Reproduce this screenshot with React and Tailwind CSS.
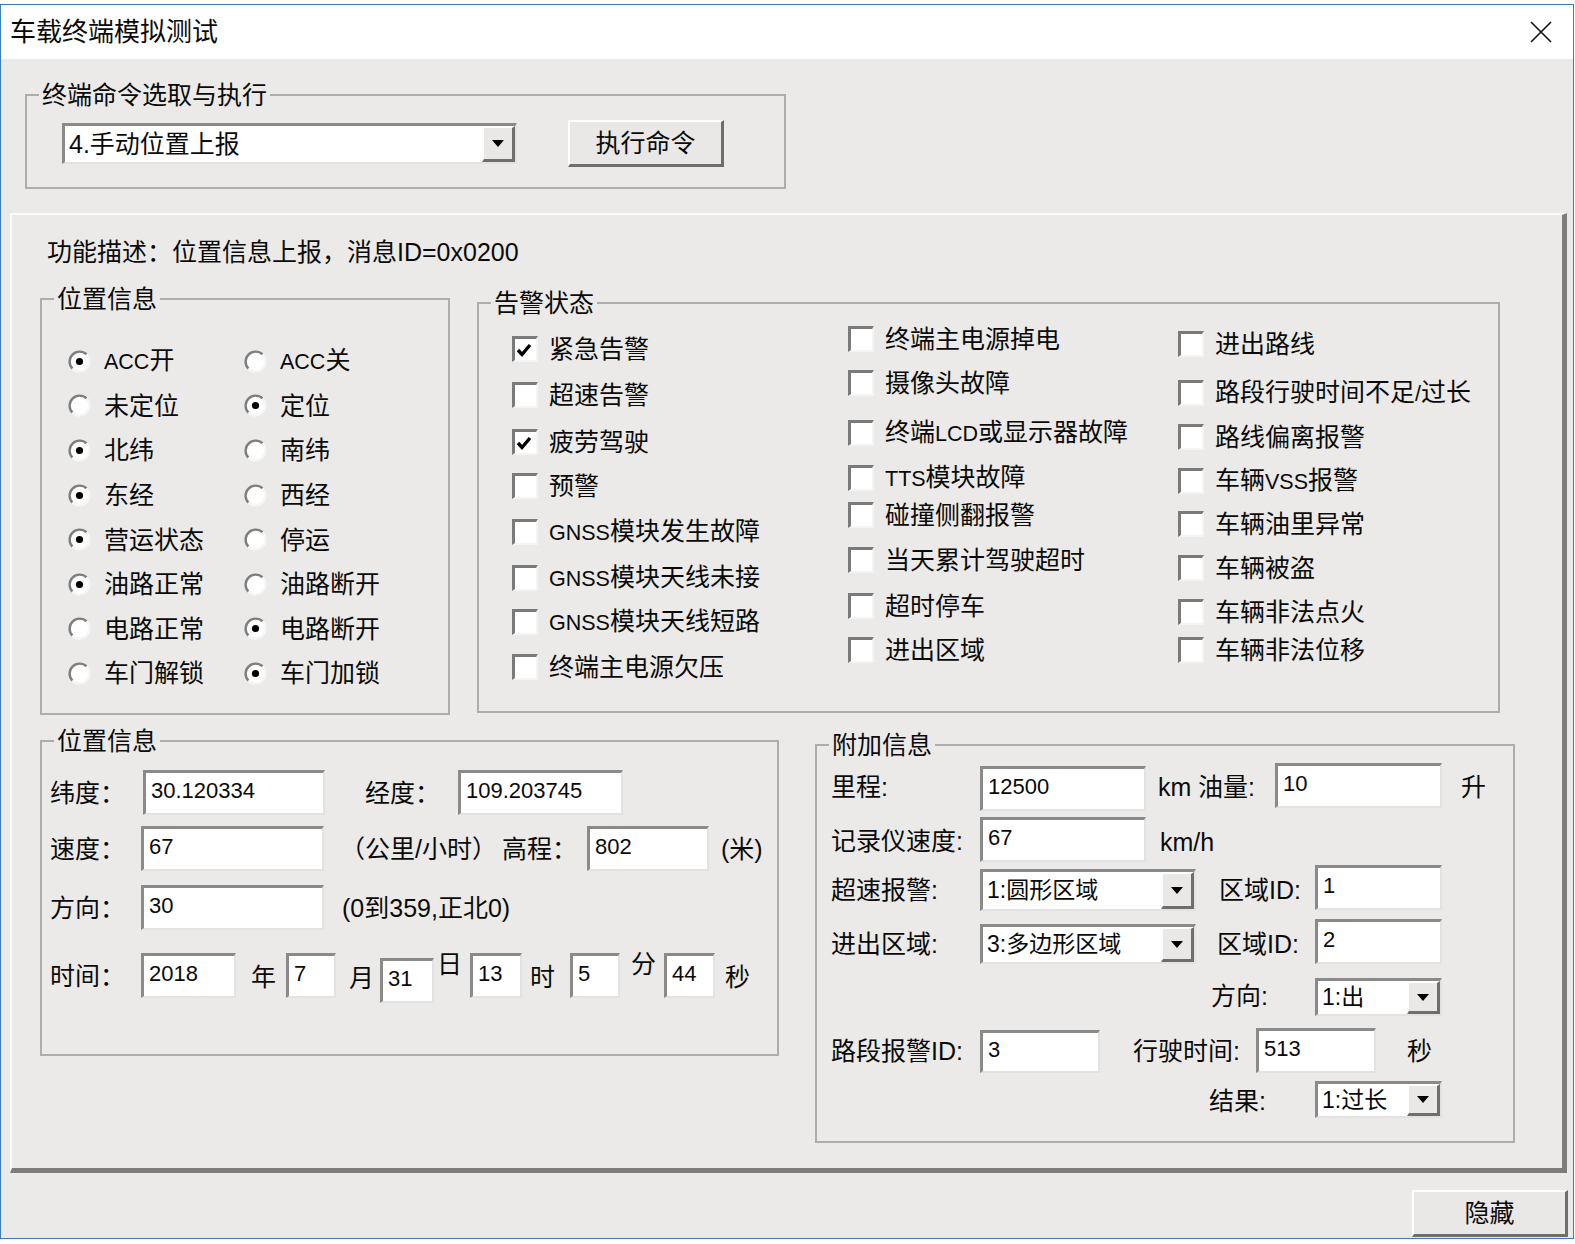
import React from 'react';

// Win32-style 3D edges
const sunken = 'bg-white border-t-[3px] border-l-[3px] border-t-[#8a8a8a] border-l-[#8a8a8a] border-r-2 border-b-2 border-r-[#e2e2e2] border-b-[#e2e2e2]';
const raised = 'bg-[#e9e8e6] border-t-2 border-l-2 border-t-white border-l-white border-r-[3px] border-b-[3px] border-r-[#6e6e6e] border-b-[#6e6e6e]';

// Latin runs in the labels are drawn a bit narrower than the CJK text
function mixed(text) {
  return text.split(/([\x20-\x7e]+)/).map((part, i) =>
    /^[\x20-\x7e]+$/.test(part) ? <span key={i} className="text-[0.86em]">{part}</span> : part
  );
}

function Group({ title, className = '', children }) {
  return (
    <fieldset className={`border-2 border-[#adadad] ${className}`}>
      <legend className="ml-[12px] px-[3px] text-[25px] leading-[30px]">{title}</legend>
      {children}
    </fieldset>
  );
}

function Field({ value, className = '' }) {
  return (
    <div className={`${sunken} flex items-center pl-[5px] pb-[5px] text-[22px] leading-none ${className}`}>
      {value}
    </div>
  );
}

function Combo({ value, className = '', text = 'text-[23px]' }) {
  return (
    <div className={`${sunken} flex items-stretch ${className}`}>
      <div className={`flex-1 flex items-center pl-[4px] leading-none ${text}`}>{value}</div>
      <div className={`${raised} w-[33px] flex items-center justify-center`}>
        <svg width="12" height="7" viewBox="0 0 12 7"><path d="M0 0h12L6 7z" fill="#000" /></svg>
      </div>
    </div>
  );
}

function Label({ children, className = '' }) {
  return <span className={`text-[25px] leading-[30px] whitespace-nowrap ${className}`}>{children}</span>;
}

function Radio({ label, checked }) {
  return (
    <div className="h-[44.6px] flex items-center gap-[13px]">
      <svg width="23" height="23" viewBox="0 0 23 23" className="shrink-0">
        <circle cx="11.5" cy="11.5" r="10" fill="#fff" />
        <path d="M4.43 18.57A10 10 0 0 1 18.57 4.43" stroke="#7e7e7e" strokeWidth="2.4" fill="none" />
        <path d="M18.57 4.43A10 10 0 0 1 4.43 18.57" stroke="#f6f6f6" strokeWidth="2.4" fill="none" />
        {checked && <circle cx="11.5" cy="11.5" r="3.6" fill="#000" />}
      </svg>
      <span className="text-[25px] leading-[30px] whitespace-nowrap">{mixed(label)}</span>
    </div>
  );
}

function Check({ label, checked, mt }) {
  return (
    <div className={`h-[26px] flex items-center gap-[11px] ${mt}`}>
      <div className="w-[26px] h-[26px] shrink-0 bg-white border-t-[3px] border-l-[3px] border-t-[#7a7a7a] border-l-[#7a7a7a] border-r-2 border-b-2 border-r-[#f4f4f4] border-b-[#f4f4f4] flex items-center">
        {checked && (
          <svg width="18" height="16" viewBox="0 0 18 16" className="ml-[1px]">
            <path d="M2 8 L6 12.5 L14 3" stroke="#000" strokeWidth="3.4" fill="none" />
          </svg>
        )}
      </div>
      <span className="text-[25px] leading-[30px] whitespace-nowrap">{mixed(label)}</span>
    </div>
  );
}

const radios = [
  ['ACC开', true, 'ACC关', false],
  ['未定位', false, '定位', true],
  ['北纬', true, '南纬', false],
  ['东经', true, '西经', false],
  ['营运状态', true, '停运', false],
  ['油路正常', true, '油路断开', false],
  ['电路正常', false, '电路断开', true],
  ['车门解锁', false, '车门加锁', true],
];

const alarmCols = [
  {
    width: 'w-[336px]',
    items: [
      ['紧急告警', true, 'mt-[18px]'],
      ['超速告警', false, 'mt-[20px]'],
      ['疲劳驾驶', true, 'mt-[21px]'],
      ['预警', false, 'mt-[18px]'],
      ['GNSS模块发生故障', false, 'mt-[20px]'],
      ['GNSS模块天线未接', false, 'mt-[20px]'],
      ['GNSS模块天线短路', false, 'mt-[18px]'],
      ['终端主电源欠压', false, 'mt-[19px]'],
    ],
  },
  {
    width: 'w-[330px]',
    items: [
      ['终端主电源掉电', false, 'mt-[8px]'],
      ['摄像头故障', false, 'mt-[18px]'],
      ['终端LCD或显示器故障', false, 'mt-[24px]'],
      ['TTS模块故障', false, 'mt-[19px]'],
      ['碰撞侧翻报警', false, 'mt-[11px]'],
      ['当天累计驾驶超时', false, 'mt-[19px]'],
      ['超时停车', false, 'mt-[20px]'],
      ['进出区域', false, 'mt-[18px]'],
    ],
  },
  {
    width: 'w-[300px]',
    items: [
      ['进出路线', false, 'mt-[13px]'],
      ['路段行驶时间不足/过长', false, 'mt-[23px]'],
      ['路线偏离报警', false, 'mt-[18px]'],
      ['车辆VSS报警', false, 'mt-[18px]'],
      ['车辆油里异常', false, 'mt-[17px]'],
      ['车辆被盗', false, 'mt-[18px]'],
      ['车辆非法点火', false, 'mt-[18px]'],
      ['车辆非法位移', false, 'mt-[12px]'],
    ],
  },
];

export default function App() {
  return (
    <div className="w-[1575px] h-[1244px] bg-white pt-[4px] text-[#0a0a0a] font-['Liberation_Sans','Noto_Sans_CJK_SC',sans-serif]">
      <div className="w-[1574px] h-[1235px] border border-[#3f7cba] bg-[#ebeae8] flex flex-col">
        {/* title bar */}
        <div className="h-[54px] shrink-0 bg-white flex items-center justify-between pl-[9px] pr-[21px]">
          <span className="text-[26px] leading-none">车载终端模拟测试</span>
          <svg width="22" height="22" viewBox="0 0 22 22">
            <path d="M1 1L21 21M21 1L1 21" stroke="#111" strokeWidth="1.6" />
          </svg>
        </div>

        {/* command selection */}
        <Group title="终端命令选取与执行" className="ml-[24px] mt-[21px] w-[761px] h-[109px] shrink-0">
          <div className="mt-[10px] ml-[35px] flex items-center">
            <Combo value="4.手动位置上报" text="text-[25px]" className="w-[455px] h-[41px]" />
            <button className={`${raised} ml-[51px] w-[156px] h-[47px] text-[25px] leading-none`}>执行命令</button>
          </div>
        </Group>

        {/* main panel */}
        <div className="ml-[9px] mt-[24px] w-[1557px] h-[960px] shrink-0 border-t-2 border-l-2 border-t-[#fbfbfb] border-l-[#fbfbfb] border-r-[5px] border-b-[5px] border-r-[#7c7c7c] border-b-[#7c7c7c] flex flex-col">
          <div className="mt-[22px] ml-[35px] text-[25px] leading-[30px]">功能描述：位置信息上报，消息ID=0x0200</div>

          <div className="mt-[17px] flex items-start">
            <Group title="位置信息" className="ml-[28px] w-[410px] h-[431px]">
              <div className="mt-[25px] ml-[26px] grid grid-cols-[176px_1fr]">
                {radios.map(([a, aOn, b, bOn]) => (
                  <React.Fragment key={a}>
                    <Radio label={a} checked={aOn} />
                    <Radio label={b} checked={bOn} />
                  </React.Fragment>
                ))}
              </div>
            </Group>

            <Group title="告警状态" className="ml-[27px] mt-[4px] w-[1023px] h-[425px]">
              <div className="ml-[33px] flex">
                {alarmCols.map((col, ci) => (
                  <div key={ci} className={`${col.width} flex flex-col`}>
                    {col.items.map(([label, on, mt]) => (
                      <Check key={label} label={label} checked={on} mt={mt} />
                    ))}
                  </div>
                ))}
              </div>
            </Group>
          </div>

          <div className="mt-[11px] flex items-start">
            <Group title="位置信息" className="ml-[28px] w-[739px] h-[330px]">
              <div className="pl-[8px] flex flex-col">
                <div className="mt-[14px] flex items-center">
                  <Label className="w-[93px]">纬度：</Label>
                  <Field value="30.120334" className="w-[182px] h-[45px]" />
                  <Label className="ml-[40px] w-[93px]">经度：</Label>
                  <Field value="109.203745" className="w-[165px] h-[45px]" />
                </div>
                <div className="mt-[11px] flex items-center">
                  <Label className="w-[91px]">速度：</Label>
                  <Field value="67" className="w-[183px] h-[45px]" />
                  <Label className="ml-[16px] w-[162px]">（公里/小时）</Label>
                  <Label className="w-[85px]">高程：</Label>
                  <Field value="802" className="w-[122px] h-[45px]" />
                  <Label className="ml-[12px]">(米)</Label>
                </div>
                <div className="mt-[14px] flex items-center">
                  <Label className="w-[91px]">方向：</Label>
                  <Field value="30" className="w-[183px] h-[45px]" />
                  <Label className="ml-[18px] text-[23px]">(0到359,正北0)</Label>
                </div>
                <div className="mt-[23px] flex items-start">
                  <Label className="w-[91px] mt-[8px]">时间：</Label>
                  <Field value="2018" className="w-[95px] h-[45px]" />
                  <Label className="ml-[15px] w-[35px] mt-[9px]">年</Label>
                  <Field value="7" className="w-[50px] h-[45px]" />
                  <Label className="ml-[13px] w-[31px] mt-[10px]">月</Label>
                  <Field value="31" className="w-[54px] h-[45px] mt-[5px]" />
                  <Label className="ml-[3px] w-[33px] -mt-[4px]">日</Label>
                  <Field value="13" className="w-[52px] h-[45px]" />
                  <Label className="ml-[8px] w-[40px] mt-[9px]">时</Label>
                  <Field value="5" className="w-[50px] h-[45px]" />
                  <Label className="ml-[11px] w-[33px] -mt-[4px]">分</Label>
                  <Field value="44" className="w-[51px] h-[45px]" />
                  <Label className="ml-[10px] mt-[9px]">秒</Label>
                </div>
              </div>
            </Group>

            <Group title="附加信息" className="ml-[36px] mt-[4px] w-[700px] h-[413px]">
              <div className="pl-[14px] flex flex-col">
                <div className="mt-[3px] flex items-start">
                  <Label className="w-[149px] mt-[9px]">里程:</Label>
                  <Field value="12500" className="w-[166px] h-[45px] mt-[3px]" />
                  <Label className="ml-[12px] w-[40px] mt-[9px] text-[22px]">km</Label>
                  <Label className="w-[77px] mt-[9px]">油量:</Label>
                  <Field value="10" className="w-[167px] h-[45px]" />
                  <Label className="ml-[19px] mt-[9px]">升</Label>
                </div>
                <div className="mt-[6px] flex items-start">
                  <Label className="w-[149px] mt-[9px]">记录仪速度:</Label>
                  <Field value="67" className="w-[166px] h-[45px]" />
                  <Label className="ml-[14px] mt-[10px] text-[22px]">km/h</Label>
                </div>
                <div className="mt-[3px] flex items-start">
                  <Label className="w-[149px] mt-[10px]">超速报警:</Label>
                  <Combo value="1:圆形区域" className="w-[216px] h-[42px] mt-[4px]" />
                  <Label className="ml-[23px] w-[96px] mt-[10px]">区域ID:</Label>
                  <Field value="1" className="w-[127px] h-[45px]" />
                </div>
                <div className="mt-[8px] flex items-start">
                  <Label className="w-[149px] mt-[10px]">进出区域:</Label>
                  <Combo value="3:多边形区域" className="w-[216px] h-[40px] mt-[5px]" />
                  <Label className="ml-[21px] w-[98px] mt-[10px]">区域ID:</Label>
                  <Field value="2" className="w-[127px] h-[45px]" />
                </div>
                <div className="mt-[14px] flex items-start">
                  <Label className="ml-[380px] w-[104px] mt-[3px]">方向:</Label>
                  <Combo value="1:出" className="w-[127px] h-[38px]" />
                </div>
                <div className="mt-[12px] flex items-start">
                  <Label className="w-[149px] mt-[8px]">路段报警ID:</Label>
                  <Field value="3" className="w-[120px] h-[43px] mt-[2px]" />
                  <Label className="ml-[33px] w-[123px] mt-[8px]">行驶时间:</Label>
                  <Field value="513" className="w-[120px] h-[45px]" />
                  <Label className="ml-[31px] mt-[8px]">秒</Label>
                </div>
                <div className="mt-[8px] flex items-start">
                  <Label className="ml-[378px] w-[106px] mt-[5px]">结果:</Label>
                  <Combo value="1:过长" className="w-[127px] h-[37px]" />
                </div>
              </div>
            </Group>
          </div>
        </div>

        <button className={`${raised} self-end mr-[5px] mt-[17px] w-[156px] h-[47px] shrink-0 text-[25px] leading-none`}>隐藏</button>
      </div>
    </div>
  );
}
